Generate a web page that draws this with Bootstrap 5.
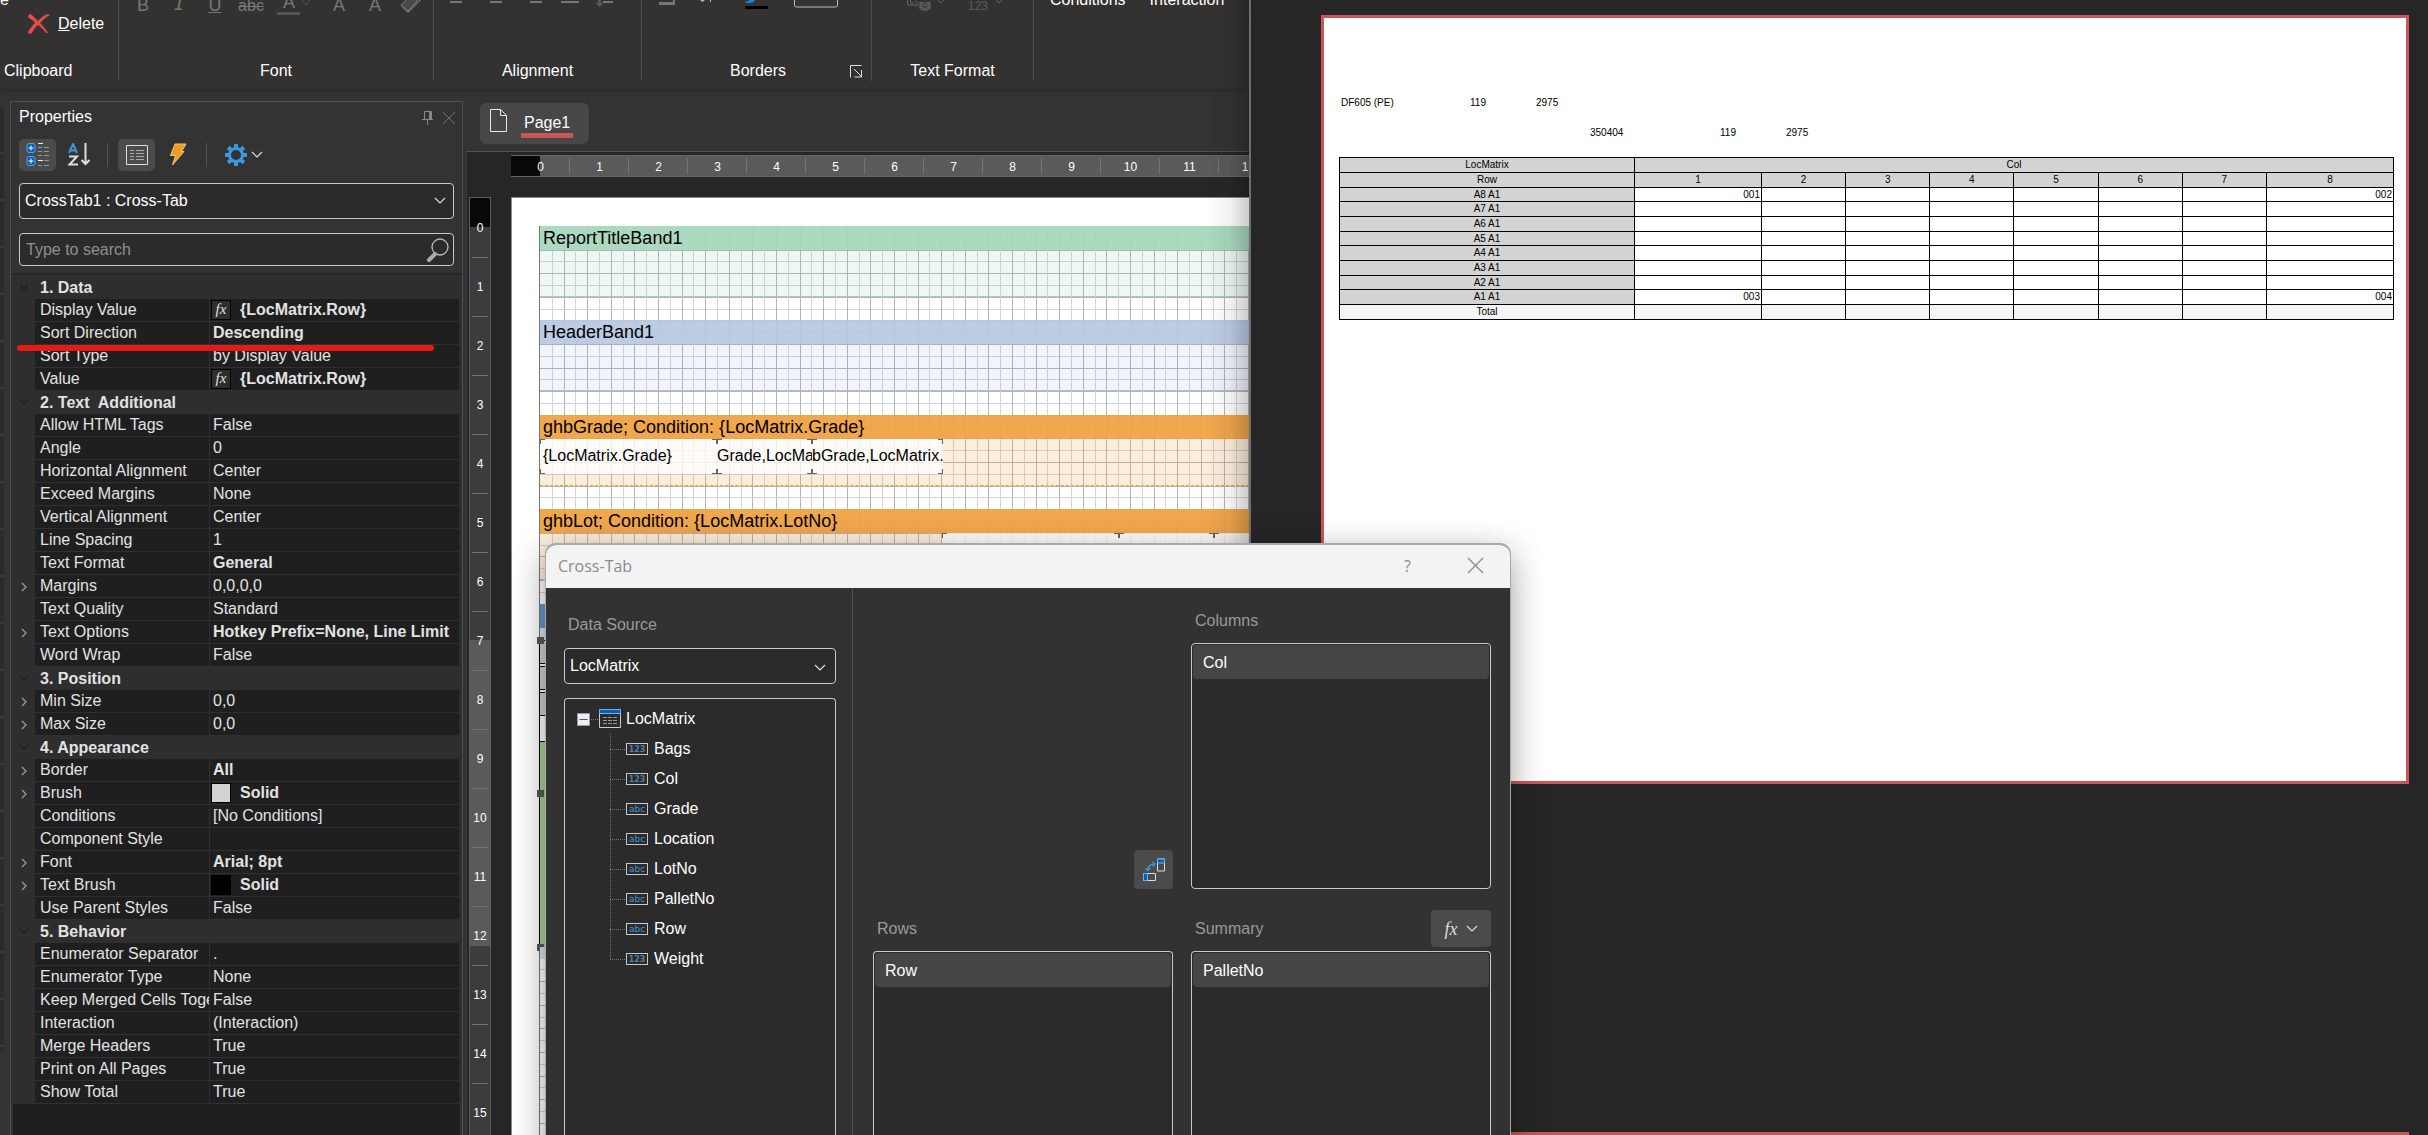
<!DOCTYPE html>
<html lang="en">
<head>
<meta charset="utf-8">
<meta name="viewport" content="width=device-width, initial-scale=1">
<title>Report Designer - Cross-Tab</title>
<link rel="stylesheet" href="https://cdn.jsdelivr.net/npm/bootstrap@5.3.0/dist/css/bootstrap.min.css">
<style>
  body { font-family: "Liberation Sans", Arial, sans-serif; font-size: 16px; line-height: 20px; color: #fff; background: #262626; }
  svg { display: block; flex: none; }
  .min-h0 { min-height: 0; }

  /* designer window */
  .designer { width: 1251px; background: #333; border-right: 2px solid #6e6e6e; }
  .designer::after { content: ""; position: absolute; inset: 0 0 0 auto; width: 44px; background: linear-gradient(90deg, transparent, rgba(0,0,0,.05) 55%, rgba(0,0,0,.2)); pointer-events: none; }
  .ribbon { height: 89px; background: #333231; box-shadow: 0 1px 6px rgba(0,0,0,.25); }
  .rgroup { height: 81px; border-right: 1px solid #4d4c4b; flex: none; }
  .rlabel { margin-top: auto; height: 20px; }
  .rclip { width: 119px; } .rfont { width: 315px; } .ralign { width: 208px; } .rborders { width: 230px; } .rformat { width: 162px; }
  .cut-row { margin-top: -10px; }
  .glyph { background: none; border: 0; padding: 0; color: #777; font-size: 18px; line-height: 20px; width: 36px; }
  .glyph-row { margin: -7px 0 0 6px; height: 24px; }
  .paste-label { margin-left: -32px; height: 20px; }
  .plain { background: none; border: 0; padding: 0; color: #fff; text-align: left; line-height: 20px; }

  /* docked side strip and properties panel */
  .dockstrip { width: 4px; margin: 18px 6px 85px 0; background: repeating-linear-gradient(#2b2b2b 0 45px, #383838 45px 47px); }
  .props { width: 453px; margin: 12px 3px 0 0; border: 1px solid #505050; border-bottom: 0; background: #333; }
  .tool { border: 0; border-radius: 5px; width: 37px; height: 32px; background: none; padding: 0; }
  .tool.on { background: #4b4b4b; }
  .vsep { width: 1px; height: 24px; background: #555; margin: 0 10px; }
  .pbar { height: 33px; padding: 5px 2px 0 8px; }
  .field { background: #2b2b2b; border: 1px solid #c8c8c8; border-radius: 4px; color: #fff; font-size: 16px; width: 100%; height: 36px; padding: 0 5px; outline: 0; appearance: none; }
  .findbox { margin: 14px 8px 7px; }
  .field.find { height: 33px; padding: 0 6px; display: block; }
  .field::placeholder { color: #8f8f8f; opacity: 1; }
  .pgrid { table-layout: fixed; width: 446px; margin: 0 0 0 2px; color: #e2e2e2; border-collapse: separate; border-spacing: 0; }
  .pgrid td, .pgrid th { height: 23px; padding: 0; line-height: 22px; white-space: pre; overflow: hidden; font-weight: 400; text-align: left; }
  .pgrid th[scope=row], .pgrid td + th + td { background: #1f1f1f; border-bottom: 1px solid #303030; }
  .pgrid th[scope=row] { padding-left: 5px; border-right: 1px solid #303030; }
  .pgrid td + th + td { padding-left: 3px; }
  .pgrid th[colspan] { padding-left: 5px; font-weight: 700; }
  .pgrid td:first-child svg { margin: 0 auto; }
  .pgrid .set { font-weight: 700; }
  .chip { width: 20px; height: 20px; margin: 1px 9px 0 -2px; border: 1px solid #000; background: #2e2e2e; font: italic 400 15px/16px "Liberation Serif", serif; text-align: center; float: left; }
  .chip.brush { background: #d3d3d3; } .chip.ink { background: #000; }
  .pwrap { background: #2e2e2e; border-top: 2px solid #262626; padding-top: 1px; }
  .pfill { background: #1f1f1f; margin: 0 2px; }
  .marker { position: absolute; left: 6px; top: 243px; width: 417px; height: 6px; border-radius: 3px; background: #e61a17; z-index: 2; }

  /* page tabs, rulers */
  .ptab { margin: 14px 0 7px 14px; height: 41px; width: 109px; padding: 6px 0 0 10px; border-radius: 6px; background: #474747; border: 0; color: #fff; text-align: left; }
  .ptab span { border-bottom: 5px solid #cb5456; padding: 0 3px; line-height: 20px; height: 25px; margin: 4px 0 0 14px; }
  .surface { border-top: 1px solid #505050; border-left: 1px solid #3a3a3a; background: #262626; }
  .hruler { margin: 3px 0 0 44px; height: 22px; border: 1px solid #666; border-width: 1px 0; background: linear-gradient(90deg, #080808 29px, #5a5a5a 29px); }
  .hruler span, .vruler span { font-size: 12px; flex: none; }
  .hruler span { width: 59px; line-height: 22px; text-align: center; background: linear-gradient(#747474, #747474) right center / 1px 16px no-repeat; }
  .vruler { width: 22px; margin: 0 20px 0 2px; padding-top: 1px; border: 1px solid #5c5c5c; border-bottom: 0; background: linear-gradient(#080808 29px, #3c3c3c 29px 442px, #5a5a5a 442px 748px, #3c3c3c 748px); }
  .vruler span { height: 59px; line-height: 59px; text-align: center; background: linear-gradient(#707070, #707070) center bottom / 16px 1px no-repeat; }

  /* report template page */
  .sheet { background: #fff; border: 1px solid #8a8a8a; border-width: 1px 0 0 1px; padding: 28px 0 0 28px; color: #000; }
  .canvas-area { box-shadow: -1px 0 #777; }
  .gridlines { position: absolute; left: 0; top: 0; }
  .band { height: 71px; margin-bottom: 23px; position: relative; flex: none; }
  .band:nth-of-type(even) { margin-bottom: 24px; }
  .band-head { height: 24px; line-height: 25px; font-size: 18px; padding-left: 3px; }
  .band-body { height: 47px; }
  .green .band-head { background: rgba(164,215,187,.92); } .green .band-body { background: rgba(120,195,155,.13); border-bottom: 1px solid #a9cdb9; }
  .blue .band-head { background: rgba(182,200,226,.92); } .blue .band-body { background: rgba(120,150,215,.1); border-bottom: 1px solid #b4bfd8; }
  .orange .band-head { background: rgba(240,162,66,.94); } .orange .band-body { background: rgba(240,162,66,.18); border-bottom: 1px dashed #e8a13c; }
  .steel .band-head { background: #6797c9; }
  .steel .band-body { height: 12px; background: #d3e3f1; }
  .band.steel { height: 36px; margin: 0; }
  .tbox { height: 35px; line-height: 34px; flex: none; white-space: nowrap; overflow: hidden; background:
      linear-gradient(#666,#666) 0 0/5px 1px no-repeat, linear-gradient(#666,#666) 0 0/1px 5px no-repeat,
      linear-gradient(#666,#666) 100% 0/5px 1px no-repeat, linear-gradient(#666,#666) 100% 0/1px 5px no-repeat,
      linear-gradient(#666,#666) 0 100%/5px 1px no-repeat, linear-gradient(#666,#666) 0 100%/1px 5px no-repeat,
      linear-gradient(#666,#666) 100% 100%/5px 1px no-repeat, linear-gradient(#666,#666) 100% 100%/1px 5px no-repeat,
      rgba(255,255,255,.78); }
  .w177 { width: 177px; padding-left: 3px; } .w95 { width: 95px; } .w131 { width: 131px; }
  .from-lot { padding-left: 402px; }
  .xtab { border-left: 1px solid #000; margin-left: -1px; position: relative; }
  .xtab div { height: 24px; background: #cfcfcf; border-bottom: 1px solid #000; border-top: 1px solid #000; margin-bottom: 2px; }
  .xtab div.cellw { background: #fff; border-top: 0; margin: 0; }
  .xtab div.cellg { height: 205px; background: #a9cf95; border: 0; margin: 0; }
  .xtab i { position: absolute; left: -3px; width: 7px; height: 7px; background: #595959; }
  .xtab i:nth-of-type(1) { top: -3px; } .xtab i:nth-of-type(2) { top: 150px; } .xtab i:nth-of-type(3) { bottom: -4px; }

  /* report preview */
  .preview { padding: 15px 19px 0 70px; overflow: hidden; }
  .paper { background: #fff; border: 3px solid #cb5558; color: #000; aspect-ratio: 297 / 210; padding: 0 12px 0 15px; font-size: 10px; line-height: 13px; flex: none; }
  .grade-line { padding: 78px 0 0 2px; } .lot-line { padding: 17px 0 0 251px; }
  .c129 { width: 129px; } .c130 { width: 130px; } .c66 { width: 66px; }
  .next-paper { margin-top: 348px; }
  .matrix { table-layout: fixed; width: 100%; margin: 18px 0 0; border-collapse: collapse; text-align: center; line-height: 12px; }
  .matrix th, .matrix td { border: 1px solid #000; padding: 0 1px; font-weight: 400; background: #fff; height: 15px; }
  .matrix tr:nth-child(3n) > * { height: 14px; }
  .matrix th { background: #d3d3d3; }
  .matrix td { text-align: right; }
  .matrix tr.sum > * { background: #f5f5f5; }
  .m-label { width: 295px; } .m-edge { width: 127px; }

  /* cross-tab dialog */
  .xdialog { position: absolute; left: 545px; top: 543px; bottom: 0; width: 966px; border: 1px solid #a9a9a9; border-top-width: 2px; border-bottom: 0; border-radius: 11px 11px 0 0; overflow: hidden; background: #323232; z-index: 5; }
  .xshadow { position: absolute; left: 545px; top: 549px; bottom: -60px; width: 966px; border-radius: 11px; box-shadow: 0 4px 34px rgba(0,0,0,.38); }
  .xtitle { height: 43px; background: #f3f3f3; color: #8b8b8b; font-family: "Open Sans", sans-serif; padding: 0 26px 2px 12px; }
  .xleft { width: 307px; border-right: 1px solid #505050; padding: 27px 16px 0 18px; }
  .xright { padding: 23px 19px 0 20px; }
  .cap { color: #9a9a9a; }
  .box { border: 1px solid #c8c8c8; background: #2b2b2b; border-radius: 4px; }
  .box-open { border-bottom: 0; border-radius: 4px 4px 0 0; }
  .entry { margin: 1px; height: 34px; line-height: 35px; padding-left: 10px; border-radius: 4px; background: #454545; }
  .xcol { flex: 1 1 0; min-width: 0; }
  .xcols { gap: 18px; }
  .xcols .box { margin-top: 4px; }
  .xhead { height: 37px; margin-top: 5px; }
  .top-area { height: 278px; }
  .top-area .box { margin-top: 12px; }
  .xleft .field { display: block; }
  .srcbox { margin-top: 13px; }
  .treebox { margin-top: 14px; padding-top: 5px; }
  .tree { list-style: none; margin: 0; padding: 0; }
  .tree li { height: 30px; line-height: 30px; }
  .tree ul { list-style: none; margin: 0 0 0 45px; padding: 0; }
  .tree ul li { display: flex; align-items: center; background:
      repeating-linear-gradient(90deg, #777 0 1px, transparent 1px 2px) 0 15px / 16px 1px no-repeat,
      repeating-linear-gradient(#777 0 1px, transparent 1px 2px) 0 0 / 1px 30px no-repeat; }
  .tree ul li:last-child { background-size: 16px 1px, 1px 16px; }
  .tree ul li svg { margin-left: 16px; } .tree ul li span { padding-left: 6px; }
  .swapbtn { width: 39px; height: 39px; border: 0; border-radius: 4px; background: #4b4b4b; padding: 0; }
  .fxbtn { width: 60px; height: 37px; border: 0; border-radius: 4px; background: #4b4b4b; color: #ddd; font: italic 18px/30px "Liberation Serif", serif; }
</style>
</head>
<body>
<svg width="0" height="0" class="position-absolute" aria-hidden="true">
  <defs>
    <g id="down"><path d="M1 1l5 5 5-5" fill="none" stroke="#ddd" stroke-width="1.2"/></g>
    <g id="right"><path d="M1 1l4 4-4 4" fill="none" stroke="#999" stroke-width="1.3"/></g>
    <g id="open"><path d="M0 1l4 4 4-4" fill="none" stroke="#1c1c1c" stroke-width="1.3"/></g>
    <g id="t-num"><rect x=".5" y=".5" width="21" height="11" fill="#2b2b2b" stroke="#c8c8c8"/><text x="11" y="9" text-anchor="middle" font-size="8" font-weight="700" fill="#4f7fa3" font-family="DejaVu Sans, sans-serif">123</text></g>
    <g id="t-abc"><rect x=".5" y=".5" width="21" height="11" fill="#2b2b2b" stroke="#c8c8c8"/><text x="11" y="9" text-anchor="middle" font-size="9" fill="#3d97db" font-family="DejaVu Sans, sans-serif">abc</text></g>
  </defs>
</svg>

<div class="d-flex vh-100 overflow-hidden position-relative">

  <!-- Designer -->
  <section class="designer d-flex flex-column flex-shrink-0 position-relative overflow-hidden">
    <header class="ribbon d-flex overflow-hidden flex-shrink-0">
      <div class="rgroup rclip d-flex flex-column">
        <div class="cut-row paste-label">Paste</div>
        <button class="plain d-flex align-items-center ps-4 mt-1" type="button">
          <svg class="ms-1 me-2" width="22" height="20" viewBox="0 0 22 20"><path d="M2 0C1 0-1 3 1 4c3 2 5 3 6 5-2 2-6 6-7 10 1 1 3 1 4 0 1-3 3-5 6-8 3 2 6 5 8 8l2 0C17 14 14 11 12 9c3-3 5-5 10-8L20 0c-4 1-7 4-10 7C8 5 5 1 2 0z" fill="#e54b4b"/></svg>
          <span><u>D</u>elete</span>
        </button>
        <div class="rlabel ps-1">Clipboard</div>
      </div>
      <div class="rgroup rfont d-flex flex-column">
        <div class="glyph-row d-flex">
          <button type="button" class="glyph">B</button><button type="button" class="glyph fst-italic font-monospace">I</button><button type="button" class="glyph text-decoration-underline">U</button>
          <button type="button" class="glyph"><s class="fs-6">abc</s></button>
          <svg width="52" height="24" viewBox="0 0 52 24"><text x="14" y="15" font-size="18" fill="#777">A</text><path d="M8 19h23v3H8z" fill="#555"/><path d="M33 7l4 5 4-5" fill="none" stroke="#555"/></svg>
          <button type="button" class="glyph">A</button><button type="button" class="glyph">A</button>
          <svg width="36" height="24" viewBox="0 0 36 24"><path d="M8 12l7 7L29 5" fill="none" stroke="#777" stroke-width="1.3"/><path d="M8 12L19 1l5 7-9 10z" fill="#4a4a4a" stroke="#777"/></svg>
        </div>
        <div class="rlabel text-center">Font</div>
      </div>
      <div class="rgroup ralign d-flex flex-column">
        <svg width="207" height="12" viewBox="434 0 207 12" fill="#777"><path d="M450 1h12v2h-12zM490 1h12v2h-12zM530 1h12v2h-12zM561 1h18v2h-18zM603 1h10v2h-10z"/><path d="M598 0h3v3h3l-4.500 4-4.500-4h3z" fill="#555"/></svg>
        <div class="rlabel text-center">Alignment</div>
      </div>
      <div class="rgroup rborders d-flex flex-column">
        <svg width="229" height="12" viewBox="642 0 229 12"><path d="M657 0v2h2v3h16V0h-2v2h-16z" fill="#777"/><path d="M700 0h5l-2.500 2zM710 0h1v2h-1z" fill="#bbb"/><path d="M744 2q5-1 6-2h5q-1 3-7 3z" fill="#1f86da"/><path d="M745 6h23v3h-23z"/><path d="M794.500 0v5q0 2 2 2h39q2 0 2-2V0" fill="none" stroke="#bbb"/></svg>
        <div class="rlabel d-flex align-items-center">
          <span class="flex-fill text-center ps-4">Borders</span>
          <svg class="me-2" width="13" height="13" viewBox="0 0 13 13" fill="none" stroke="#ddd"><path d="M.5 12.500V.5h11M4 4l7 7M11.500 5v7h-7"/></svg>
        </div>
      </div>
      <div class="rgroup rformat d-flex flex-column">
        <svg width="161" height="12" viewBox="872 0 161 12" fill="none" stroke="#666"><path d="M907.500 0v5h11M910.500 0v3h3M915 1l3 2"/><path d="M920 2q5 3 10 0v7q-5 3-10 0zM920 4q5 3 10 0M920 7q5 3 10 0" fill="#444"/><path d="M938 0l3 3 3-3M996 0l3 3 3-3"/><text x="968" y="10" font-size="12" fill="#5c5c5c" stroke="none">123</text></svg>
        <div class="rlabel text-center">Text Format</div>
      </div>
      <div class="cut-row d-flex text-nowrap ps-3">
        <button type="button" class="plain align-self-start me-4">Conditions</button>
        <button type="button" class="plain align-self-start me-4">Interaction</button>
        <button type="button" class="plain align-self-start">Copy<br>Style</button>
      </div>
    </header>

    <div class="d-flex flex-fill min-h0">
      <div class="dockstrip flex-shrink-0"></div>

      <!-- Properties -->
      <aside class="props d-flex flex-column flex-shrink-0 position-relative">
        <div class="marker"></div>
        <div class="pbar d-flex align-items-start">
          <span class="me-auto">Properties</span>
          <svg class="mt-1" width="12" height="14" viewBox="0 0 12 14" fill="none" stroke="#888"><path d="M2.500 8V.5h7V8M0 8.500h11M5.500 9v5"/><path d="M7 1h2v7H7z" fill="#888" stroke="none"/></svg>
          <svg class="ms-2 me-1 mt-1" width="14" height="14" viewBox="0 0 14 14"><path d="M1 1l12 12M13 1L1 13" stroke="#777"/></svg>
        </div>
        <div class="d-flex align-items-center px-2 mt-1">
          <button type="button" class="tool on ms-0" title="Categorized">
            <svg class="mx-auto" width="24" height="24" viewBox="0 0 24 24"><g fill="#0a5fb5" stroke="#4da3e6"><rect x="1" y=".5" width="8" height="9" rx="2"/><rect x="1" y="13.500" width="8" height="9" rx="2"/></g><path d="M5 2.500v5M2.500 5h5M5 15.500v5M2.500 18h5" stroke="#fff"/><path d="M12 .5h5M12 17.500h5" stroke="#eee"/><path d="M12 4.500h4M12 8.500h4M18 4.500h5M18 8.500h5M18 12.500h5M12 12.500h4M18 17.500h5M12 22.500h4M18 22.500h5" stroke="#999"/></svg>
          </button>
          <button type="button" class="tool ms-1" title="Alphabetical">
            <svg class="mx-auto" width="24" height="24" viewBox="0 0 24 24" fill="none" stroke-width="2"><path d="M2 10L6 1l4 9M3.500 7.500h5" stroke="#3d97db"/><path d="M2 13.500h8L2.500 21.500H11M18.500 0v20M14.500 17l4 4 4-4" stroke="#ddd"/></svg>
          </button>
          <span class="vsep"></span>
          <button type="button" class="tool on" title="Properties">
            <svg class="mx-auto" width="22" height="20" viewBox="0 0 22 20" fill="none"><path d="M.5.5h21v19H.5z" stroke="#ddd"/><path d="M4 5.500h4M10 5.500h8M4 8.500h4M10 8.500h8M4 11.500h4M10 11.500h8M4 14.500h4M10 14.500h8" stroke="#aaa"/></svg>
          </button>
          <button type="button" class="tool ms-1" title="Events">
            <svg class="mx-auto" width="18" height="24" viewBox="0 0 18 24"><path d="M6 1h11l-4.500 7.500H15L3.500 22l3-9.500H1.500z" fill="#ee9b26" stroke="#f6c869"/></svg>
          </button>
          <span class="vsep"></span>
          <button type="button" class="tool d-flex align-items-center ms-1" title="Settings">
            <svg class="ms-1" width="22" height="22" viewBox="0 0 22 22"><g fill="#3d97db"><rect x="9" y="0" width="4" height="22"/><rect x="0" y="9" width="22" height="4"/><rect x="9" y="0" width="4" height="22" transform="rotate(45 11 11)"/><rect x="9" y="0" width="4" height="22" transform="rotate(-45 11 11)"/><circle cx="11" cy="11" r="8"/></g><circle cx="11" cy="11" r="5" fill="#333"/></svg>
            <svg class="ms-1" width="12" height="8"><use href="#down"/></svg>
          </button>
        </div>
        <div class="position-relative d-flex align-items-center mx-2 mt-2 pt-1">
          <select class="field" aria-label="Component"><option>CrossTab1 : Cross-Tab</option></select>
          <svg class="position-absolute end-0 me-2" width="12" height="8"><use href="#down"/></svg>
        </div>
        <div class="findbox position-relative">
          <input class="field find" type="search" placeholder="Type to search" aria-label="Search">
          <svg class="position-absolute end-0 top-0 mt-1 me-1" width="24" height="26" viewBox="0 0 24 26" fill="none"><circle cx="14" cy="10" r="8" stroke="#bbb" stroke-width="1.300"/><path d="M9 17l-6 6" stroke="#aaa" stroke-width="4" stroke-linecap="round"/></svg>
        </div>
        <div class="pwrap">
        <table class="pgrid">
          <colgroup><col style="width:22px"><col style="width:175px"><col></colgroup>
          <tbody id="pgrid"></tbody>
        </table>
        </div>
        <div class="pfill flex-fill"></div>
      </aside>

      <!-- Template page -->
      <main class="d-flex flex-column flex-fill overflow-hidden">
        <button type="button" class="ptab d-flex flex-shrink-0">
          <svg width="17" height="24" viewBox="0 0 17 24" fill="none" stroke="#e8e8e8"><path d="M.5.5h10l6 6v16H.5zM10.500.5v6h6"/></svg>
          <span>Page1</span>
        </button>
        <div class="surface d-flex flex-column flex-fill min-h0">
          <div class="hruler d-flex overflow-hidden flex-shrink-0" id="hruler"></div>
          <div class="d-flex flex-fill min-h0 mt-3 pt-1">
            <div class="vruler d-flex flex-column overflow-hidden flex-shrink-0" id="vruler"></div>
            <div class="sheet flex-fill overflow-hidden">
              <div class="canvas-area position-relative h-100 d-flex flex-column">
                <svg class="gridlines" id="gridlines" width="100%" height="100%" shape-rendering="crispEdges"></svg>
                <div class="band green"><div class="band-head">ReportTitleBand1</div><div class="band-body"></div></div>
                <div class="band blue"><div class="band-head">HeaderBand1</div><div class="band-body"></div></div>
                <div class="band orange"><div class="band-head">ghbGrade; Condition: {LocMatrix.Grade}</div>
                  <div class="band-body d-flex"><div class="tbox w177">{LocMatrix.Grade}</div><div class="tbox w95">Grade,LocMa</div><div class="tbox w131">bGrade,LocMatrix.</div></div></div>
                <div class="band orange"><div class="band-head">ghbLot; Condition: {LocMatrix.LotNo}</div>
                  <div class="band-body d-flex from-lot"><div class="tbox w177">{LocMatrix.LotNo}</div><div class="tbox w95">LotNo,LocM</div><div class="tbox w131">bLotNo,Lo</div></div></div>
                <div class="band steel"><div class="band-head"></div><div class="band-body"></div></div>
                <div class="xtab"><div></div><div></div><div></div><div class="cellw"></div><div class="cellg"></div><i></i><i></i><i></i></div>
                <div class="band steel"><div class="band-body"></div></div>
              </div>
            </div>
          </div>
        </div>
      </main>
    </div>
  </section>

  <!-- Preview -->
  <section class="preview d-flex flex-column flex-fill">
    <div class="paper">
      <div class="grade-line d-flex"><span class="c129">DF605 (PE)</span><span class="c66">119</span><span>2975</span></div>
      <div class="lot-line d-flex"><span class="c130">350404</span><span class="c66">119</span><span>2975</span></div>
      <table class="matrix">
        <colgroup><col class="m-label"><col class="m-edge"><col><col><col><col><col><col><col class="m-edge"></colgroup>
        <tbody>
          <tr><th>LocMatrix</th><th colspan="8">Col</th></tr>
          <tr><th>Row</th><th>1</th><th>2</th><th>3</th><th>4</th><th>5</th><th>6</th><th>7</th><th>8</th></tr>
          <tr><th>A8 A1</th><td>001</td><td></td><td></td><td></td><td></td><td></td><td></td><td>002</td></tr>
          <tr><th>A7 A1</th><td></td><td></td><td></td><td></td><td></td><td></td><td></td><td></td></tr>
          <tr><th>A6 A1</th><td></td><td></td><td></td><td></td><td></td><td></td><td></td><td></td></tr>
          <tr><th>A5 A1</th><td></td><td></td><td></td><td></td><td></td><td></td><td></td><td></td></tr>
          <tr><th>A4 A1</th><td></td><td></td><td></td><td></td><td></td><td></td><td></td><td></td></tr>
          <tr><th>A3 A1</th><td></td><td></td><td></td><td></td><td></td><td></td><td></td><td></td></tr>
          <tr><th>A2 A1</th><td></td><td></td><td></td><td></td><td></td><td></td><td></td><td></td></tr>
          <tr><th>A1 A1</th><td>003</td><td></td><td></td><td></td><td></td><td></td><td></td><td>004</td></tr>
          <tr class="sum"><th>Total</th><td></td><td></td><td></td><td></td><td></td><td></td><td></td><td></td></tr>
        </tbody>
      </table>
    </div>
    <div class="paper next-paper"></div>
  </section>

  <!-- Cross-Tab dialog -->
  <div class="xshadow"></div>
  <section class="xdialog d-flex flex-column">
    <header class="xtitle d-flex align-items-center flex-shrink-0">
      <span class="me-auto">Cross-Tab</span>
      <button type="button" class="plain text-reset me-5 pe-2">?</button>
      <button type="button" class="plain" aria-label="Close"><svg width="17" height="17" viewBox="0 0 17 17"><path d="M1 1l15 15M16 1L1 16" stroke="#8b8b8b" stroke-width="1.300"/></svg></button>
    </header>
    <div class="d-flex flex-fill min-h0">
      <div class="xleft d-flex flex-column flex-shrink-0">
        <label class="cap ps-1" for="src">Data Source</label>
        <div class="srcbox position-relative">
          <select id="src" class="field"><option>LocMatrix</option></select>
          <svg class="position-absolute end-0 top-0 mt-3 me-2" width="14" height="8"><use href="#down"/></svg>
        </div>
        <div class="treebox box box-open flex-fill">
          <ul class="tree">
            <li class="d-flex align-items-center ps-2">
              <svg class="ms-1" width="45" height="20" viewBox="0 0 45 20"><path d="M.5 4.500h12v12H.5z" fill="#eee" stroke="#999"/><path d="M2.500 10.500h8" stroke="#3050c0"/><path d="M14 10.500h8" stroke="#777" stroke-dasharray="1 1"/><path d="M22.500.5h21v18h-21z" stroke="#ccc" fill="#2b2b2b"/><path d="M22.500.5h21v4h-21z" fill="#0a5fb5" stroke="#6db3ee"/><path d="M26 8.500h14M26 11.500h14M26 14.500h14" stroke="#999" stroke-dasharray="4 1"/></svg>
              <span class="ps-1">LocMatrix</span></li>
          </ul>
          <div class="tree"><ul>
            <li><svg width="22" height="12"><use href="#t-num"/></svg><span>Bags</span></li>
            <li><svg width="22" height="12"><use href="#t-num"/></svg><span>Col</span></li>
            <li><svg width="22" height="12"><use href="#t-abc"/></svg><span>Grade</span></li>
            <li><svg width="22" height="12"><use href="#t-abc"/></svg><span>Location</span></li>
            <li><svg width="22" height="12"><use href="#t-abc"/></svg><span>LotNo</span></li>
            <li><svg width="22" height="12"><use href="#t-abc"/></svg><span>PalletNo</span></li>
            <li><svg width="22" height="12"><use href="#t-abc"/></svg><span>Row</span></li>
            <li><svg width="22" height="12"><use href="#t-num"/></svg><span>Weight</span></li>
          </ul></div>
        </div>
      </div>
      <div class="xright d-flex flex-column flex-fill">
        <div class="xcols top-area d-flex flex-shrink-0">
          <div class="xcol d-flex align-items-end justify-content-end">
            <button type="button" class="swapbtn" title="Swap"><svg class="mx-auto" width="24" height="24" viewBox="0 0 24 24" fill="none"><path d="M15.500 1h7v12h-7z" stroke="#ddd"/><path d="M15.500 1h7v4h-7z" fill="#0a5fb5" stroke="#6db3ee"/><path d="M1.500 15.500h12v7h-12z" stroke="#ddd"/><path d="M1.500 15.500h4v7h-4z" fill="#0a5fb5" stroke="#6db3ee"/><path d="M6 12q0-6 7-6M10.500 3.500L13 6l-2.500 2.500M3.500 10L6 12.500 8.500 10" stroke="#3d97db" stroke-width="1.300"/></svg></button>
          </div>
          <div class="xcol d-flex flex-column">
            <span class="cap ps-1">Columns</span>
            <div class="box flex-fill"><div class="entry">Col</div></div>
          </div>
        </div>
        <div class="xcols d-flex flex-fill pt-3">
          <div class="xcol d-flex flex-column">
            <div class="xhead d-flex align-items-center ps-1"><span class="cap">Rows</span></div>
            <div class="box box-open flex-fill"><div class="entry">Row</div></div>
          </div>
          <div class="xcol d-flex flex-column">
            <div class="xhead d-flex align-items-center justify-content-between ps-1"><span class="cap">Summary</span>
              <button type="button" class="fxbtn d-flex align-items-center justify-content-center gap-2"><span>fx</span><svg width="12" height="8"><use href="#down"/></svg></button></div>
            <div class="box box-open flex-fill"><div class="entry">PalletNo</div></div>
          </div>
        </div>
      </div>
    </div>
  </section>
</div>

<script>
  // Property grid: [name, value, flags, chip]  b = changed value, + = expandable
  const groups = [
    ["1. Data", [["Display Value", "{LocMatrix.Row}", "b", "fx"], ["Sort Direction", "Descending", "b"], ["Sort Type", "by Display Value", ""], ["Value", "{LocMatrix.Row}", "b", "fx"]]],
    ["2. Text  Additional", [["Allow HTML Tags", "False", ""], ["Angle", "0", ""], ["Horizontal Alignment", "Center", ""], ["Exceed Margins", "None", ""], ["Vertical Alignment", "Center", ""], ["Line Spacing", "1", ""], ["Text Format", "General", "b"], ["Margins", "0,0,0,0", "+"], ["Text Quality", "Standard", ""], ["Text Options", "Hotkey Prefix=None, Line Limit", "b+"], ["Word Wrap", "False", ""]]],
    ["3. Position", [["Min Size", "0,0", "+"], ["Max Size", "0,0", "+"]]],
    ["4. Appearance", [["Border", "All", "b+"], ["Brush", "Solid", "b+", "brush"], ["Conditions", "[No Conditions]", ""], ["Component Style", "", ""], ["Font", "Arial; 8pt", "b+"], ["Text Brush", "Solid", "b+", "ink"], ["Use Parent Styles", "False", ""]]],
    ["5. Behavior", [["Enumerator Separator", ".", ""], ["Enumerator Type", "None", ""], ["Keep Merged Cells Toge", "False", ""], ["Interaction", "(Interaction)", ""], ["Merge Headers", "True", ""], ["Print on All Pages", "True", ""], ["Show Total", "True", ""]]]
  ];
  let html = "";
  for (const [title, rows] of groups) {
    html += `<tr><td><svg width="8" height="7"><use href="#open"/></svg></td><th colspan="2">${title}</th></tr>`;
    for (const [name, value, flags, chip] of rows) {
      const arrow = flags.includes("+") ? '<svg width="6" height="10"><use href="#right"/></svg>' : "";
      const box = chip ? `<span class="chip ${chip}">${chip === "fx" ? "fx" : ""}</span>` : "";
      html += `<tr><td>${arrow}</td><th scope="row">${name}</th><td class="${flags.includes("b") ? "set" : ""}">${box}${value}</td></tr>`;
    }
  }
  document.getElementById("pgrid").innerHTML = html;

  // Rulers, one label per centimetre
  const labels = n => Array.from({ length: n }, (_, i) => `<span>${i}</span>`).join("");
  document.getElementById("hruler").innerHTML = labels(13);
  document.getElementById("vruler").innerHTML = labels(16);

  // Grid of 2 mm steps, every second line darker
  let lines = "";
  for (let i = 1; i < 80; i++) {
    const p = Math.round(i * 11.8), c = i % 2 ? "#d4d4d4" : "#b4b4b4";
    lines += `<rect x="${p}" y="0" width="1" height="100%" fill="${c}"/><rect x="0" y="${p}" width="100%" height="1" fill="${c}"/>`;
  }
  document.getElementById("gridlines").innerHTML = lines;
</script>
<script src="https://cdn.jsdelivr.net/npm/bootstrap@5.3.0/dist/js/bootstrap.bundle.min.js"></script>
</body>
</html>
